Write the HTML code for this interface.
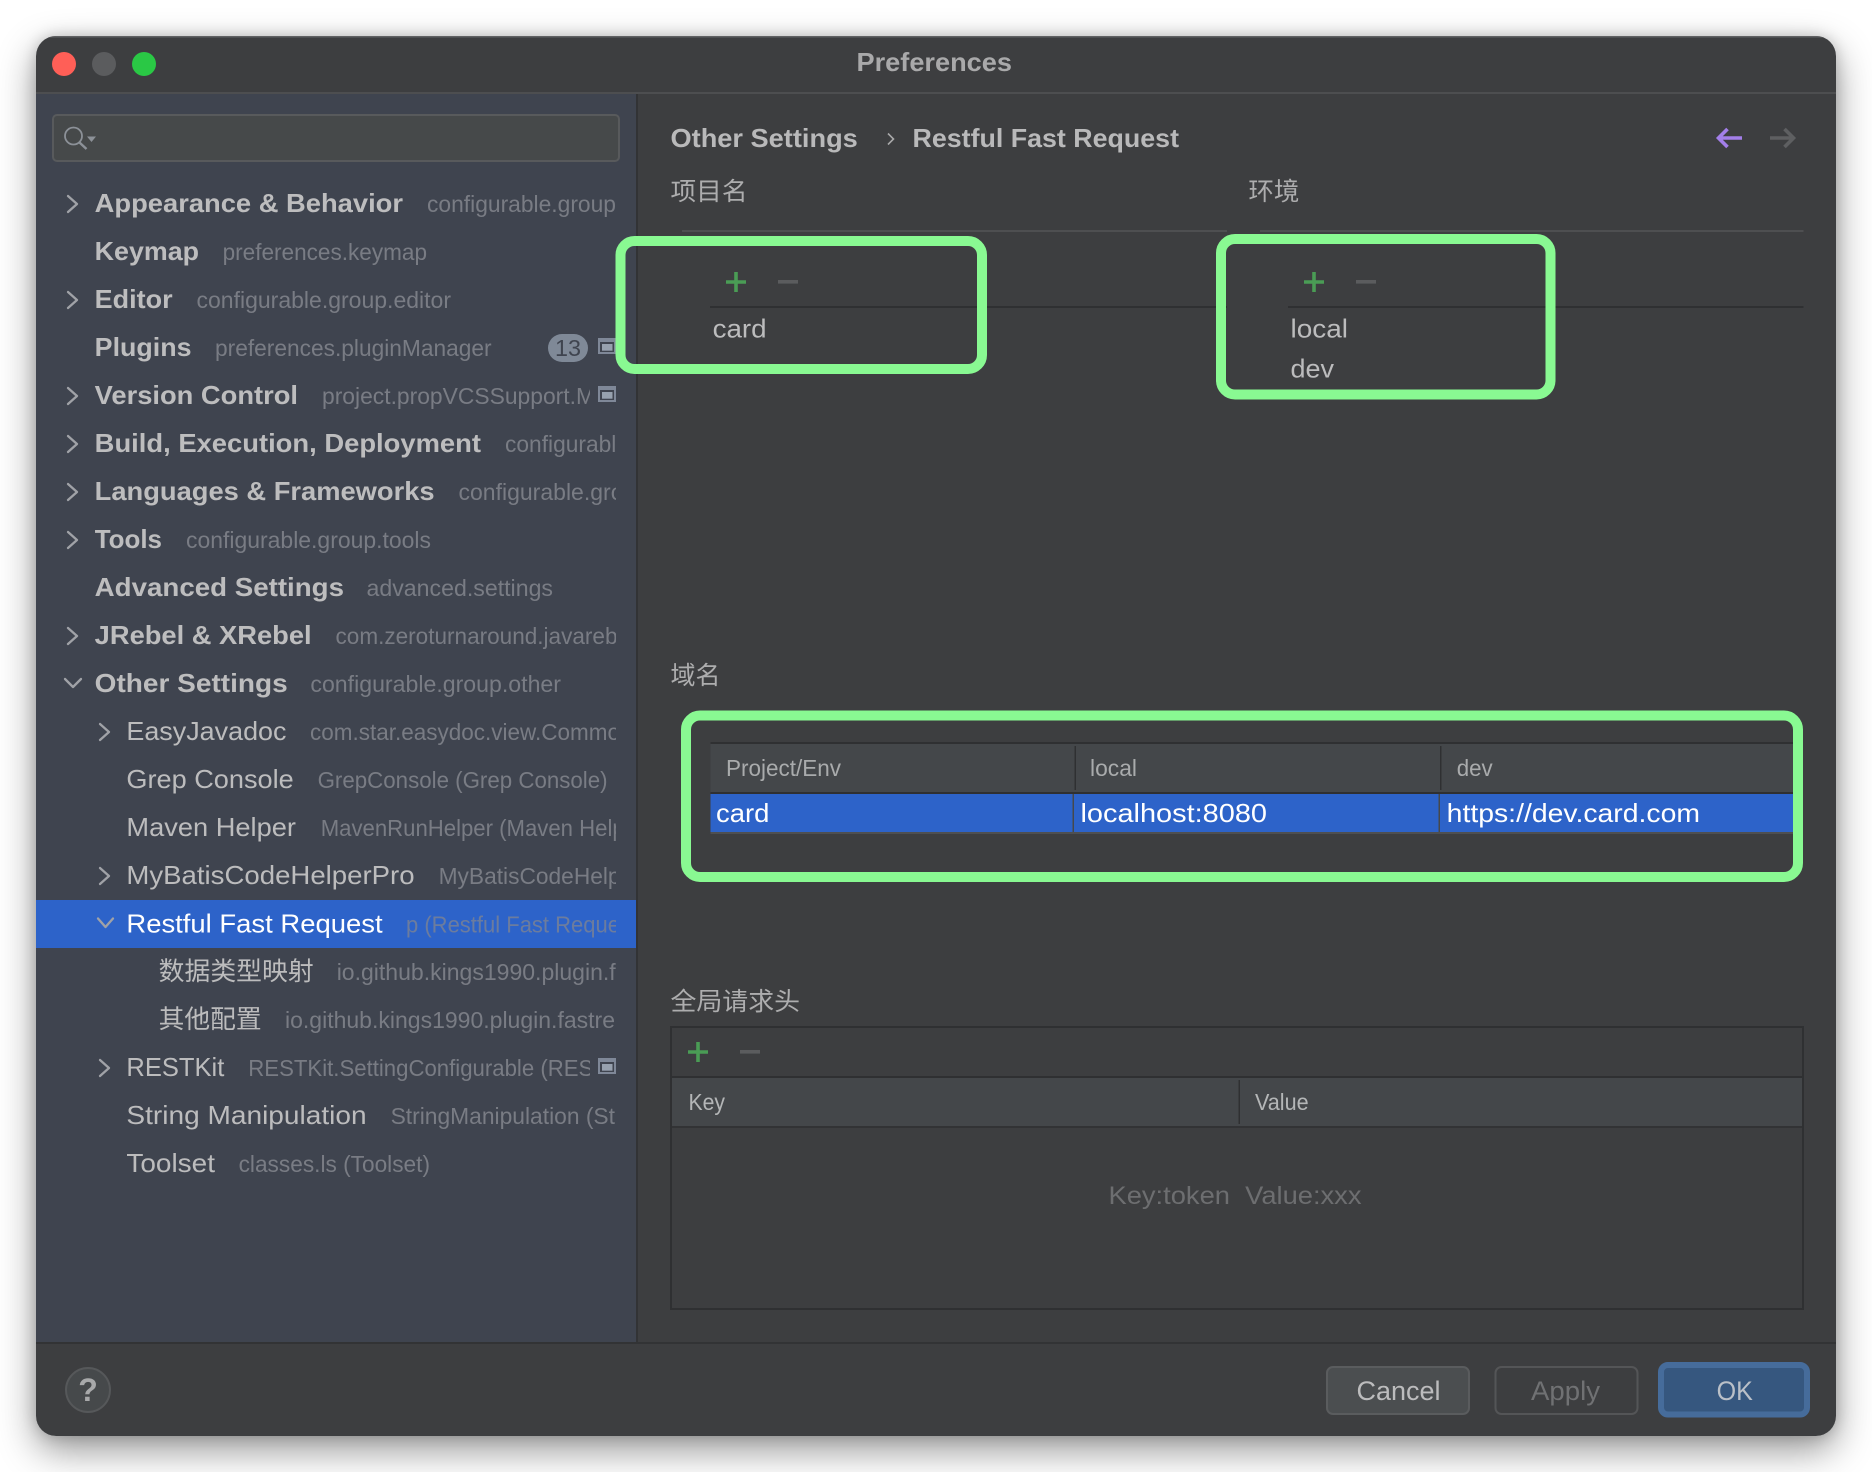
<!DOCTYPE html>
<html lang="zh">
<head>
<meta charset="utf-8">
<title>Preferences</title>
<style>
html,body{margin:0;padding:0;width:1872px;height:1472px;background:#fff;overflow:hidden}
#w{position:absolute;left:36px;top:36px;width:1800px;height:1400px;border-radius:20px;box-shadow:0 14px 38px rgba(0,0,0,.42),0 0 14px rgba(0,0,0,.18)}
svg{position:absolute;left:0;top:0;display:block}
text{font-family:"Liberation Sans","Noto Sans CJK SC",sans-serif;white-space:pre}
.b{font-size:26px;font-weight:700;fill:#bdbdbe}
.n{font-size:26px;fill:#bcbcbd}
.c{font-size:25.5px;fill:#bcbcbd}
.g{font-size:23px;fill:#797c84}
.l{font-size:25px;fill:#adadae}
.h{font-size:23px;fill:#a9abac}
.w{font-size:26px;fill:#fff}
.t{font-size:26px;font-weight:700;fill:#a9a9aa}
</style>
</head>
<body>
<div id="w"></div>
<svg width="1872" height="1472" viewBox="0 0 1872 1472" xmlns="http://www.w3.org/2000/svg">
<defs>
<clipPath id="c1"><rect x="90" y="100" width="526" height="1240"/></clipPath>
<clipPath id="c2"><rect x="90" y="100" width="500" height="1240"/></clipPath>
<clipPath id="win"><rect x="36" y="36" width="1800" height="1400" rx="20"/></clipPath>
</defs>

<g clip-path="url(#win)">
<rect x="36" y="36" width="1800" height="1400" fill="#3d3e40"/>
<rect x="36" y="36" width="1800" height="1.5" fill="#606163"/>
<rect x="36" y="92" width="1800" height="2" fill="#4d4e50"/>
<rect x="36" y="94" width="600" height="1248" fill="#3f444f"/>
<rect x="636" y="94" width="2" height="1248" fill="#323335"/>
<rect x="36" y="1342" width="1800" height="2" fill="#323335"/>
<rect x="36" y="900" width="600" height="48" fill="#2d63c9"/>
</g>

<!-- traffic lights -->
<circle cx="64" cy="64" r="12" fill="#ff5f57"/>
<circle cx="104" cy="64" r="12" fill="#5b5c5e"/>
<circle cx="144" cy="64" r="12" fill="#2ac845"/>
<text class="t" x="856.5" y="71" textLength="155.5" lengthAdjust="spacingAndGlyphs">Preferences</text>

<!-- search -->
<rect x="53" y="115" width="566" height="46" rx="4" fill="#46494a" stroke="#585a5c" stroke-width="2"/>
<circle cx="73.5" cy="136" r="8.5" fill="none" stroke="#8c9198" stroke-width="1.8"/>
<path d="M79.5 142.5L86.5 149" fill="none" stroke="#8c9198" stroke-width="2.4"/>
<path d="M87 136.5H96L91.5 142Z" fill="#8c9198"/>

<!-- tree chevrons -->
<g fill="none" stroke="#a0a2a7" stroke-width="2.3" stroke-linecap="round" stroke-linejoin="round">
<path d="M68 196L77 204L68 212"/>
<path d="M68 292L77 300L68 308"/>
<path d="M68 388L77 396L68 404"/>
<path d="M68 436L77 444L68 452"/>
<path d="M68 484L77 492L68 500"/>
<path d="M68 532L77 540L68 548"/>
<path d="M68 628L77 636L68 644"/>
<path d="M65 679L73 687L81 679"/>
<path d="M100 724L109 732L100 740"/>
<path d="M100 868L109 876L100 884"/>
<path d="M98 918.5L105.5 927L113 918.5"/>
<path d="M100 1060L109 1068L100 1076"/>
</g>

<!-- tree labels -->
<text class="b" x="94.7" y="212" textLength="308.3" lengthAdjust="spacingAndGlyphs">Appearance &amp; Behavior</text>
<text class="b" x="94.7" y="260" textLength="104.3" lengthAdjust="spacingAndGlyphs">Keymap</text>
<text class="b" x="94.7" y="308" textLength="77.9" lengthAdjust="spacingAndGlyphs">Editor</text>
<text class="b" x="94.7" y="356" textLength="96.8" lengthAdjust="spacingAndGlyphs">Plugins</text>
<text class="b" x="94.7" y="404" textLength="203.3" lengthAdjust="spacingAndGlyphs">Version Control</text>
<text class="b" x="94.7" y="452" textLength="386.3" lengthAdjust="spacingAndGlyphs">Build, Execution, Deployment</text>
<text class="b" x="94.7" y="500" textLength="339.9" lengthAdjust="spacingAndGlyphs">Languages &amp; Frameworks</text>
<text class="b" x="94.7" y="548" textLength="67.3" lengthAdjust="spacingAndGlyphs">Tools</text>
<text class="b" x="94.7" y="596" textLength="249.3" lengthAdjust="spacingAndGlyphs">Advanced Settings</text>
<text class="b" x="94.7" y="644" textLength="216.9" lengthAdjust="spacingAndGlyphs">JRebel &amp; XRebel</text>
<text class="b" x="94.7" y="692" textLength="193" lengthAdjust="spacingAndGlyphs">Other Settings</text>
<text class="n" x="126.4" y="740" textLength="160.1" lengthAdjust="spacingAndGlyphs">EasyJavadoc</text>
<text class="n" x="126.4" y="788" textLength="167.3" lengthAdjust="spacingAndGlyphs">Grep Console</text>
<text class="n" x="126.4" y="836" textLength="169.6" lengthAdjust="spacingAndGlyphs">Maven Helper</text>
<text class="n" x="126.4" y="884" textLength="288.2" lengthAdjust="spacingAndGlyphs">MyBatisCodeHelperPro</text>
<text class="w" x="126.4" y="932.5" textLength="256.2" lengthAdjust="spacingAndGlyphs">Restful Fast Request</text>
<text class="c" x="158.7" y="980" textLength="155" lengthAdjust="spacingAndGlyphs">数据类型映射</text>
<text class="c" x="158.7" y="1028" textLength="103" lengthAdjust="spacingAndGlyphs">其他配置</text>
<text class="n" x="126.4" y="1076" textLength="97.9" lengthAdjust="spacingAndGlyphs">RESTKit</text>
<text class="n" x="126.4" y="1124" textLength="240.2" lengthAdjust="spacingAndGlyphs">String Manipulation</text>
<text class="n" x="126.4" y="1172" textLength="88.6" lengthAdjust="spacingAndGlyphs">Toolset</text>

<!-- tree gray -->
<g clip-path="url(#c1)">
<text class="g" x="427" y="212" textLength="189" lengthAdjust="spacingAndGlyphs">configurable.group</text>
<text class="g" x="222.6" y="260" textLength="204.4" lengthAdjust="spacingAndGlyphs">preferences.keymap</text>
<text class="g" x="196.5" y="308" textLength="254.5" lengthAdjust="spacingAndGlyphs">configurable.group.editor</text>
<text class="g" x="215" y="356" textLength="276.6" lengthAdjust="spacingAndGlyphs">preferences.pluginManager</text>
<text class="g" x="505" y="452" textLength="124" lengthAdjust="spacingAndGlyphs">configurable</text>
<text class="g" x="458.5" y="500" textLength="165" lengthAdjust="spacingAndGlyphs">configurable.gro</text>
<text class="g" x="186" y="548" textLength="245" lengthAdjust="spacingAndGlyphs">configurable.group.tools</text>
<text class="g" x="366.5" y="596" textLength="186.5" lengthAdjust="spacingAndGlyphs">advanced.settings</text>
<text class="g" x="335.5" y="644" textLength="282" lengthAdjust="spacingAndGlyphs">com.zeroturnaround.javareb</text>
<text class="g" x="310.4" y="692" textLength="250.6" lengthAdjust="spacingAndGlyphs">configurable.group.other</text>
<text class="g" x="310" y="740" textLength="310" lengthAdjust="spacingAndGlyphs">com.star.easydoc.view.Commo</text>
<text class="g" x="317.6" y="788" textLength="290" lengthAdjust="spacingAndGlyphs">GrepConsole (Grep Console)</text>
<text class="g" x="320.7" y="836" textLength="304" lengthAdjust="spacingAndGlyphs">MavenRunHelper (Maven Help</text>
<text class="g" x="438.6" y="884" textLength="182" lengthAdjust="spacingAndGlyphs">MyBatisCodeHelp</text>
<text class="g" x="406" y="932.5" textLength="214" lengthAdjust="spacingAndGlyphs" style="fill:#6c7c9e">p (Restful Fast Reque</text>
<text class="g" x="336.7" y="980" textLength="279" lengthAdjust="spacingAndGlyphs">io.github.kings1990.plugin.f</text>
<text class="g" x="285" y="1028" textLength="330" lengthAdjust="spacingAndGlyphs">io.github.kings1990.plugin.fastre</text>
<text class="g" x="390.6" y="1124" textLength="224.4" lengthAdjust="spacingAndGlyphs">StringManipulation (St</text>
<text class="g" x="238.6" y="1172" textLength="191.4" lengthAdjust="spacingAndGlyphs">classes.ls (Toolset)</text>
</g>
<g clip-path="url(#c2)">
<text class="g" x="322" y="404" textLength="273" lengthAdjust="spacingAndGlyphs">project.propVCSSupport.M</text>
<text class="g" x="248.3" y="1076" textLength="345" lengthAdjust="spacingAndGlyphs">RESTKit.SettingConfigurable (RES</text>
</g>

<!-- badge & project icons -->
<rect x="548" y="334" width="40" height="28" rx="14" fill="#7f8997"/>
<text x="555" y="356" style="font-size:23px;fill:#3f444f" textLength="26" lengthAdjust="spacingAndGlyphs">13</text>
<g fill="none" stroke="#7f8898" stroke-width="2">
<rect x="599" y="339" width="16" height="14"/>
<rect x="599" y="387" width="16" height="14"/>
<rect x="599" y="1059" width="16" height="14"/>
</g>
<g fill="#7f8898">
<rect x="598" y="338" width="18" height="4"/>
<rect x="598" y="386" width="18" height="4"/>
<rect x="598" y="1058" width="18" height="4"/>
</g>
<g fill="#97a1ae">
<rect x="602" y="344" width="10.5" height="6.7"/>
<rect x="602" y="392" width="10.5" height="6.7"/>
<rect x="602" y="1064" width="10.5" height="6.7"/>
</g>

<!-- breadcrumb -->
<text class="t" x="670.5" y="147" textLength="187.3" lengthAdjust="spacingAndGlyphs" style="fill:#b9b9ba">Other Settings</text>
<path d="M888 133.5L893.5 139L888 144.5" fill="none" stroke="#a9a9aa" stroke-width="1.6"/>
<text class="t" x="912.5" y="147" textLength="266.5" lengthAdjust="spacingAndGlyphs" style="fill:#b9b9ba">Restful Fast Request</text>

<!-- nav arrows -->
<path d="M1742 138H1719M1727.5 129L1718.5 138L1727.5 147" fill="none" stroke="#a37fe9" stroke-width="3.6"/>
<path d="M1770 138H1793M1784.5 129L1793.5 138L1784.5 147" fill="none" stroke="#5e5f61" stroke-width="3.6"/>

<!-- project / env -->
<text class="l" x="670.5" y="200" textLength="77" lengthAdjust="spacingAndGlyphs">项目名</text>
<text class="l" x="1248.4" y="200" textLength="51" lengthAdjust="spacingAndGlyphs">环境</text>
<rect x="682" y="230" width="545" height="2" fill="#4e4f51"/>
<rect x="1260" y="230" width="543.5" height="2" fill="#4e4f51"/>
<rect x="710" y="306" width="517" height="2" fill="#2f3032"/>
<rect x="1288" y="306" width="515.5" height="2" fill="#2f3032"/>

<path d="M736 272V292M726 282H746" stroke="#4a9c55" stroke-width="3.6" fill="none"/>
<rect x="778" y="280" width="20" height="3.6" fill="#5b5c5e"/>
<path d="M1314 272V292M1304 282H1324" stroke="#4a9c55" stroke-width="3.6" fill="none"/>
<rect x="1356" y="280" width="20" height="3.6" fill="#5b5c5e"/>

<text class="n" x="712.6" y="337.5" textLength="54" lengthAdjust="spacingAndGlyphs">card</text>
<text class="n" x="1290.5" y="337.5" textLength="57.5" lengthAdjust="spacingAndGlyphs">local</text>
<text class="n" x="1290.5" y="377.5" textLength="43.5" lengthAdjust="spacingAndGlyphs">dev</text>

<!-- domain table -->
<text class="l" x="670.5" y="684" textLength="50" lengthAdjust="spacingAndGlyphs">域名</text>
<rect x="710.5" y="742" width="1085" height="2" fill="#2f3032"/>
<rect x="710.5" y="744" width="1085" height="48" fill="#44474a"/>
<rect x="710.5" y="792" width="1085" height="2" fill="#2f3032"/>
<rect x="710.5" y="794" width="1085" height="38" fill="#2d63c9"/>
<rect x="710.5" y="832" width="1085" height="2" fill="#4e4f51"/>
<rect x="1074.5" y="746" width="1.5" height="44" fill="#2f3032"/>
<rect x="1440" y="746" width="1.5" height="44" fill="#2f3032"/>
<rect x="1072.5" y="794" width="1.5" height="38" fill="#45484b"/>
<rect x="1438.5" y="794" width="1.5" height="38" fill="#45484b"/>
<text class="h" x="726" y="776" textLength="115" lengthAdjust="spacingAndGlyphs">Project/Env</text>
<text class="h" x="1090" y="776" textLength="47" lengthAdjust="spacingAndGlyphs">local</text>
<text class="h" x="1456.7" y="776" textLength="36" lengthAdjust="spacingAndGlyphs">dev</text>
<text class="w" x="716" y="822" textLength="53.4" lengthAdjust="spacingAndGlyphs">card</text>
<text class="w" x="1080.5" y="822" textLength="186.5" lengthAdjust="spacingAndGlyphs">localhost:8080</text>
<text class="w" x="1446.7" y="822" textLength="253.3" lengthAdjust="spacingAndGlyphs">https://dev.card.com</text>

<!-- global headers -->
<text class="l" x="670.5" y="1010" textLength="129.5" lengthAdjust="spacingAndGlyphs">全局请求头</text>
<rect x="671" y="1027" width="1132" height="282" fill="none" stroke="#2f3032" stroke-width="2"/>
<path d="M698 1042V1062M688 1052H708" stroke="#4a9c55" stroke-width="3.6" fill="none"/>
<rect x="740" y="1050" width="20" height="3.6" fill="#5b5c5e"/>
<rect x="672" y="1076" width="1130" height="2" fill="#2f3032"/>
<rect x="672" y="1078" width="1130" height="48" fill="#44474a"/>
<rect x="672" y="1126" width="1130" height="2" fill="#323335"/>
<rect x="1238.5" y="1080" width="1.5" height="44" fill="#2f3032"/>
<text class="h" x="688.5" y="1110" textLength="36.5" lengthAdjust="spacingAndGlyphs" style="fill:#b4b6b7">Key</text>
<text class="h" x="1255" y="1110" textLength="53.6" lengthAdjust="spacingAndGlyphs" style="fill:#b4b6b7">Value</text>
<text x="1108.5" y="1204" textLength="253" lengthAdjust="spacingAndGlyphs" style="font-size:25px;fill:#6d6e70">Key:token  Value:xxx</text>

<!-- green highlight boxes -->
<g fill="none" stroke="#89f992" stroke-width="10">
<rect x="620.5" y="241" width="361.5" height="128" rx="14"/>
<rect x="1221" y="239" width="329.5" height="155.5" rx="14"/>
<rect x="686" y="715.5" width="1112" height="161.5" rx="14"/>
</g>

<!-- footer -->
<circle cx="88" cy="1390" r="22" fill="#46494b" stroke="#56585a" stroke-width="2"/>
<text x="88" y="1401" text-anchor="middle" style="font-size:32px;font-weight:700;fill:#a8a9aa">?</text>

<rect x="1327" y="1367" width="142" height="47" rx="6" fill="#4b4e50" stroke="#5a5c5e" stroke-width="2"/>
<text class="n" x="1356.5" y="1400" textLength="84" lengthAdjust="spacingAndGlyphs" style="font-size:27px">Cancel</text>
<rect x="1495.5" y="1367" width="142" height="47" rx="6" fill="none" stroke="#545557" stroke-width="2"/>
<text x="1531" y="1400" textLength="69" lengthAdjust="spacingAndGlyphs" style="font-size:27px;fill:#707173">Apply</text>
<rect x="1661" y="1365" width="146" height="49.5" rx="7" fill="#36577f" stroke="#466c9b" stroke-width="6"/>
<text x="1716.6" y="1400" textLength="36.2" lengthAdjust="spacingAndGlyphs" style="font-size:27px;fill:#bac0c8">OK</text>
</svg>
</body>
</html>
